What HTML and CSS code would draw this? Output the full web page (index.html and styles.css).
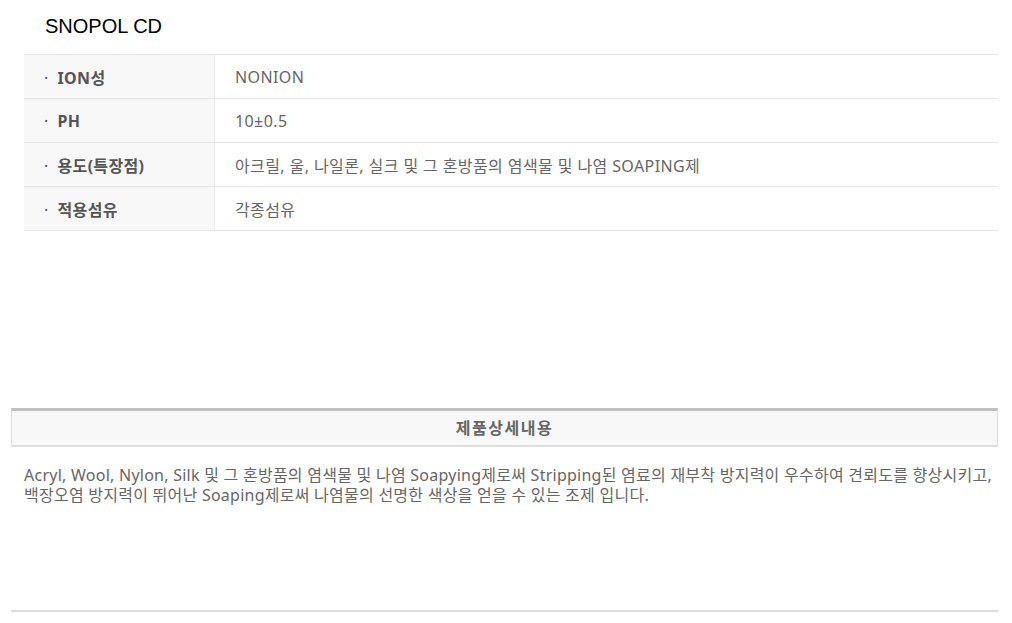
FILE: index.html
```html
<!DOCTYPE html>
<html lang="ko">
<head>
    <meta charset="UTF-8">
    <meta name="viewport" content="width=device-width, initial-scale=1.0">
    <title>SNOPOL CD</title>
    <link rel="stylesheet" href="styles.css">
</head>
<body>

    <h2 class="product-name">SNOPOL CD</h2>

    <table class="spec-table">
        <tr>
            <th><span class="dot">·</span>ION성</th>
            <td>NONION</td>
        </tr>
        <tr>
            <th><span class="dot">·</span>PH</th>
            <td>10±0.5</td>
        </tr>
        <tr>
            <th><span class="dot">·</span>용도(특장점)</th>
            <td>아크릴, 울, 나일론, 실크 및 그 혼방품의 염색물 및 나염 SOAPING제</td>
        </tr>
        <tr>
            <th><span class="dot">·</span>적용섬유</th>
            <td>각종섬유</td>
        </tr>
    </table>

    <div class="detail">
        <div class="detail-title">제품상세내용</div>
        <p class="detail-text">Acryl, Wool, Nylon, Silk 및 그 혼방품의 염색물 및 나염 Soapying제로써 Stripping된 염료의 재부착 방지력이 우수하여 견뢰도를 향상시키고, 백장오염 방지력이 뛰어난 Soaping제로써 나염물의 선명한 색상을 얻을 수 있는 조제 입니다.</p>
    </div>

</body>
</html>
```

FILE: styles.css
```css
/* General Styles */
body {
    margin: 0;
    padding: 0;
    background: #fff;
    font-family: "Noto Sans", "Noto Sans CJK KR", sans-serif;
    color: #666;
}

.product-name {
    margin: 0;
    padding-left: 45px;
    height: 54px;
    line-height: 52px;
    font-family: "Liberation Sans", Arial, sans-serif;
    font-size: 20px;
    font-weight: normal;
    color: #000;
}

/* Spec Table */
.spec-table {
    width: calc(100% - 38px);
    margin: 0 14px 0 24px;
    border-collapse: collapse;
    border-top: 1px solid #e5e5e5;
}

.spec-table th,
.spec-table td {
    height: 43px;
    padding: 0 20px;
    border-bottom: 1px solid #e5e5e5;
    font-size: 16px;
    text-align: left;
    vertical-align: middle;
}

.spec-table th {
    width: 150px;
    background: #f8f8f8;
    border-right: 1px solid #ebebeb;
    color: #555;
    font-weight: bold;
    letter-spacing: 0.3px;
}

.spec-table .dot {
    margin-right: 9px;
    font-weight: normal;
}

.spec-table td {
    color: #666;
    letter-spacing: 0.4px;
}

/* Detail Box */
.detail {
    margin: 177px 14px 0 11px;
    padding-bottom: 105px;
    border-bottom: 2px solid #ddd;
}

.detail-title {
    height: 34px;
    line-height: 34px;
    background: #f8f8f8;
    border-top: 3px solid #c0c0c0;
    border-left: 1px solid #ddd;
    border-right: 1px solid #ddd;
    border-bottom: 2px solid #ddd;
    text-align: center;
    font-size: 16px;
    font-weight: bold;
    letter-spacing: 1.5px;
    color: #666;
}

.detail-text {
    margin: 18px 0 0 13px;
    font-size: 16px;
    line-height: 20px;
    letter-spacing: 0.25px;
    color: #666;
    word-break: keep-all;
}
```
